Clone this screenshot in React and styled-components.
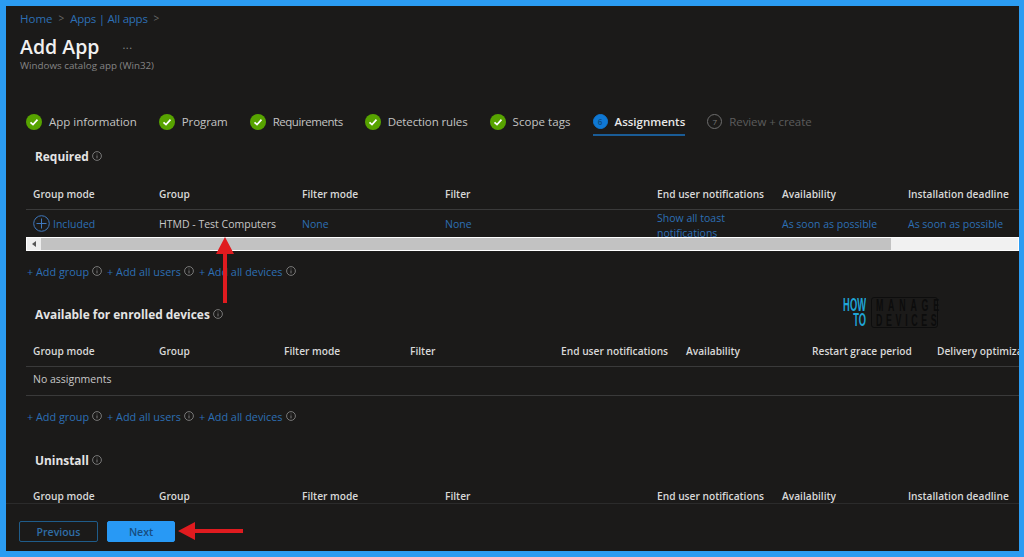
import React from 'react'
import styled, { createGlobalStyle } from 'styled-components'

const Global = createGlobalStyle`
  html, body {
    margin: 0;
    padding: 0;
    background: #1b1a19;
  }
  * {
    box-sizing: border-box;
  }
`

const requiredCols = '126px 143px 143px 212px 125px 126px 140px'
const availableCols = '126px 125px 126px 151px 125px 126px 125px 120px'

const Frame = styled.div`
  position: relative;
  width: 1024px;
  height: 557px;
  border: solid #2b9cf2;
  border-width: 6px 5px 6px 6px;
  background: #1b1a19;
  display: flex;
  flex-direction: column;
  overflow: hidden;
  font-family: "Open Sans", "Noto Sans", sans-serif;
  font-size: 10.5px;
  color: #d6d6d6;
`

const Content = styled.div`
  flex: 1;
  min-height: 0;
  overflow: hidden;
`

const Breadcrumb = styled.div`
  display: flex;
  align-items: center;
  gap: 6px;
  margin: 4px 0 0 14px;
  height: 16px;
  font-size: 11.5px;
  color: #2d6fb4;
`

const Crumb = styled.span`
  letter-spacing: ${p => p.$tracking || 0}px;
`

const Chevron = styled.span`
  color: #6a6a6a;
  font-size: 10px;
`

const TitleRow = styled.div`
  display: flex;
  align-items: center;
  margin: 6px 0 0 14px;
  height: 28px;
`

const Title = styled.h1`
  margin: 0;
  font-size: 19.5px;
  font-weight: 600;
  color: #f0f0f0;
`

const More = styled.span`
  margin: -4px 0 0 23px;
  font-size: 11px;
  letter-spacing: 0.5px;
  color: #8a8a8a;
`

const Subtitle = styled.div`
  margin: -1px 0 0 14px;
  height: 14px;
  line-height: 14px;
  font-size: 9.8px;
  color: #858585;
`

const Tabs = styled.div`
  display: flex;
  margin: 36px 0 0 20px;
  gap: 22px;
`

const Tab = styled.div`
  display: flex;
  align-items: center;
  gap: 7px;
  height: 27px;
  font-size: 11.5px;
  letter-spacing: ${p => p.$tracking || 0}px;
  font-weight: ${p => (p.$active ? 600 : 400)};
  color: ${p => (p.$active ? '#e8e8e8' : p.$muted ? '#5c5c5c' : '#c4c4c4')};
  border-bottom: 2px solid ${p => (p.$active ? '#1a5c96' : 'transparent')};
`

const StepNumber = styled.span`
  width: 15px;
  height: 15px;
  border-radius: 50%;
  display: flex;
  align-items: center;
  justify-content: center;
  font-size: 8px;
  letter-spacing: 0;
  color: ${p => (p.$active ? '#0d4a80' : '#777')};
  background: ${p => (p.$active ? '#0f78d4' : 'transparent')};
  border: 1px solid ${p => (p.$active ? '#0f78d4' : '#6e6e6e')};
`

const SectionTitle = styled.h2`
  display: flex;
  align-items: center;
  gap: 3px;
  margin: ${p => p.$top}px 0 0 29px;
  height: 16px;
  font-size: 11.9px;
  font-weight: 700;
  color: #e4e4e4;
`

const Table = styled.div`
  margin: ${p => p.$top}px 0 0 20px;
  overflow: hidden;
`

const Row = styled.div`
  display: grid;
  grid-template-columns: ${p => p.$cols};
  grid-auto-rows: minmax(0, 1fr);
  width: 1100px;
  height: ${p => p.$height}px;
  padding-bottom: ${p => p.$pad ?? 4}px;
  align-items: center;
  border-bottom: ${p => (p.$line ? '1px solid #3a3a3a' : 'none')};
  overflow: hidden;
`

const HeadCell = styled.div`
  padding-left: 7px;
  font-size: 10.2px;
  font-weight: 600;
  color: #d8d8d8;
  white-space: nowrap;
`

const Cell = styled.div`
  padding-left: 7px;
  color: ${p => (p.$link ? '#2d6fb4' : '#c8c8c8')};
  white-space: nowrap;
`

const IncludedCell = styled(Cell)`
  display: flex;
  align-items: center;
  gap: 3px;
`

const WrapCell = styled(Cell)`
  white-space: normal;
  line-height: 15px;
  width: 96px;
  padding-top: 1px;
  align-self: start;
`

const Scrollbar = styled.div`
  display: flex;
  height: 14px;
  border: 1px solid #fff;
  background: #f1f1f1;
`

const ScrollButton = styled.div`
  width: 14px;
  display: flex;
  align-items: center;
  justify-content: center;
  background: #ededed;
`

const ScrollThumb = styled.div`
  width: 850px;
  background: #c2c2c2;
`

const Links = styled.div`
  display: flex;
  align-items: center;
  gap: 5px;
  margin: 12px 0 0 21px;
  height: 16px;
  font-size: 10.85px;
  color: #2d6fb4;
`

const LinkItem = styled.span`
  display: flex;
  align-items: center;
  gap: 3px;
`

const Footer = styled.div`
  flex: none;
  height: 48px;
  display: flex;
  gap: 9px;
  padding: 17px 0 0 13px;
  border-top: 1px solid #2b2b2b;
`

const Button = styled.button`
  width: ${p => p.$width}px;
  height: 21px;
  padding: 0;
  border-radius: 2px;
  font-family: inherit;
  font-size: 10.5px;
  font-weight: 600;
  color: ${p => (p.$primary ? '#174d80' : '#2f6ea8')};
  background: ${p => (p.$primary ? '#2899f5' : 'transparent')};
  border: 1px solid ${p => (p.$primary ? '#2899f5' : '#1f5c8a')};
`

const Arrow = styled.svg`
  position: absolute;
  left: ${p => p.$left}px;
  top: ${p => p.$top}px;
`

const Logo = styled.div`
  position: absolute;
  left: 837px;
  top: 291px;
  display: flex;
  font-family: "Liberation Sans", sans-serif;
  font-weight: 700;
`

const LogoHow = styled.div`
  width: 23px;
  padding-top: 1px;
  font-size: 18px;
  line-height: 15px;
  text-align: right;
  color: #1fa5d6;
  transform: scaleX(0.52);
  transform-origin: right center;
  display: flex;
  flex-direction: column;
  align-items: flex-end;
`

const LogoBox = styled.div`
  margin-left: 5px;
  width: 67px;
  height: 31px;
  padding: 1px 0 0 4px;
  border: 1px solid #0d0d0d;
  border-radius: 3px;
  color: #0c0c0c;
`

const LogoLine = styled.div`
  font-size: 16px;
  line-height: 14.5px;
  letter-spacing: ${p => p.$tracking}px;
  white-space: nowrap;
  transform: scaleX(0.55);
  transform-origin: left center;
`

function InfoIcon () {
  return (
    <svg width='10' height='10' viewBox='0 0 10 10' fill='none' stroke='#8f8f8f' strokeWidth='0.8'>
      <circle cx='5' cy='5' r='4.4' />
      <path d='M5 4.4V7.4M5 2.6V3.4' />
    </svg>
  )
}

function CheckIcon () {
  return (
    <svg width='16' height='16' viewBox='0 0 16 16'>
      <circle cx='8' cy='8' r='8' fill='#57a300' />
      <path d='M4.5 8.3L7 10.6L11.5 5.6' fill='none' stroke='#fff' strokeWidth='1.7' />
    </svg>
  )
}

function AddIcon () {
  return (
    <svg width='17' height='17' viewBox='0 0 17 17' fill='none' stroke='#3f78bd' strokeWidth='1'>
      <circle cx='8.5' cy='8.5' r='7.8' />
      <path d='M8.5 3.5V13.5M3.5 8.5H13.5' />
    </svg>
  )
}

function AddLinks () {
  return (
    <Links>
      <LinkItem>+ Add group <InfoIcon /></LinkItem>
      <LinkItem>+ Add all users <InfoIcon /></LinkItem>
      <LinkItem>+ Add all devices <InfoIcon /></LinkItem>
    </Links>
  )
}

const doneSteps = [
  { name: 'App information' },
  { name: 'Program', tracking: -0.1 },
  { name: 'Requirements', tracking: -0.45 },
  { name: 'Detection rules', tracking: -0.1 },
  { name: 'Scope tags', tracking: 0.05 }
]
const requiredHead = ['Group mode', 'Group', 'Filter mode', 'Filter', 'End user notifications', 'Availability', 'Installation deadline']
const availableHead = ['Group mode', 'Group', 'Filter mode', 'Filter', 'End user notifications', 'Availability', 'Restart grace period', 'Delivery optimization priority']

function HeadRow ({ cols, names }) {
  return (
    <Row $cols={cols} $height={28} $line>
      {names.map(n => <HeadCell key={n}>{n}</HeadCell>)}
    </Row>
  )
}

export default function App () {
  return (
    <Frame>
      <Global />
      <Content>
        <Breadcrumb>
          <Crumb>Home</Crumb>
          <Chevron>&gt;</Chevron>
          <Crumb $tracking={-0.25}>Apps | All apps</Crumb>
          <Chevron>&gt;</Chevron>
        </Breadcrumb>
        <TitleRow>
          <Title>Add App</Title>
          <More>...</More>
        </TitleRow>
        <Subtitle>Windows catalog app (Win32)</Subtitle>

        <Tabs>
          {doneSteps.map(s => (
            <Tab key={s.name} $tracking={s.tracking}><CheckIcon />{s.name}</Tab>
          ))}
          <Tab $active><StepNumber $active>6</StepNumber>Assignments</Tab>
          <Tab $muted $tracking={-0.1}><StepNumber>7</StepNumber>Review + create</Tab>
        </Tabs>

        <SectionTitle $top={12}>Required <InfoIcon /></SectionTitle>
        <Table $top={18}>
          <HeadRow cols={requiredCols} names={requiredHead} />
          <Row $cols={requiredCols} $height={27} $pad={0}>
            <IncludedCell $link><AddIcon />Included</IncludedCell>
            <Cell>HTMD - Test Computers</Cell>
            <Cell $link>None</Cell>
            <Cell $link>None</Cell>
            <WrapCell $link>Show all toast notifications</WrapCell>
            <Cell $link>As soon as possible</Cell>
            <Cell $link>As soon as possible</Cell>
          </Row>
          <Scrollbar>
            <ScrollButton>
              <svg width='5' height='6' viewBox='0 0 5 6'><path d='M4 0V6L0 3Z' fill='#555' /></svg>
            </ScrollButton>
            <ScrollThumb />
          </Scrollbar>
        </Table>
        <AddLinks />

        <SectionTitle $top={27}>Available for enrolled devices <InfoIcon /></SectionTitle>
        <Table $top={17}>
          <HeadRow cols={availableCols} names={availableHead} />
          <Row $cols={availableCols} $height={29} $line>
            <Cell>No assignments</Cell>
          </Row>
        </Table>
        <AddLinks />

        <SectionTitle $top={28}>Uninstall <InfoIcon /></SectionTitle>
        <Table $top={16}>
          <HeadRow cols={requiredCols} names={requiredHead} />
        </Table>
      </Content>

      <Footer>
        <Button $width={79}>Previous</Button>
        <Button $width={68} $primary>Next</Button>
      </Footer>

      <Logo>
        <LogoHow><span>HOW</span><span>TO</span></LogoHow>
        <LogoBox>
          <LogoLine $tracking={8.7}>MANAGE</LogoLine>
          <LogoLine $tracking={6.7}>DEVICES</LogoLine>
        </LogoBox>
      </Logo>

      <Arrow $left={209} $top={231} width='20' height='68' viewBox='0 0 20 68'>
        <path d='M10 0L19 17H12V66H8V17H1Z' fill='#e01b1f' />
      </Arrow>
      <Arrow $left={172} $top={515} width='66' height='20' viewBox='0 0 66 20'>
        <path d='M0 10L17 1V8H65V12H17V19Z' fill='#e01b1f' />
      </Arrow>
    </Frame>
  )
}
